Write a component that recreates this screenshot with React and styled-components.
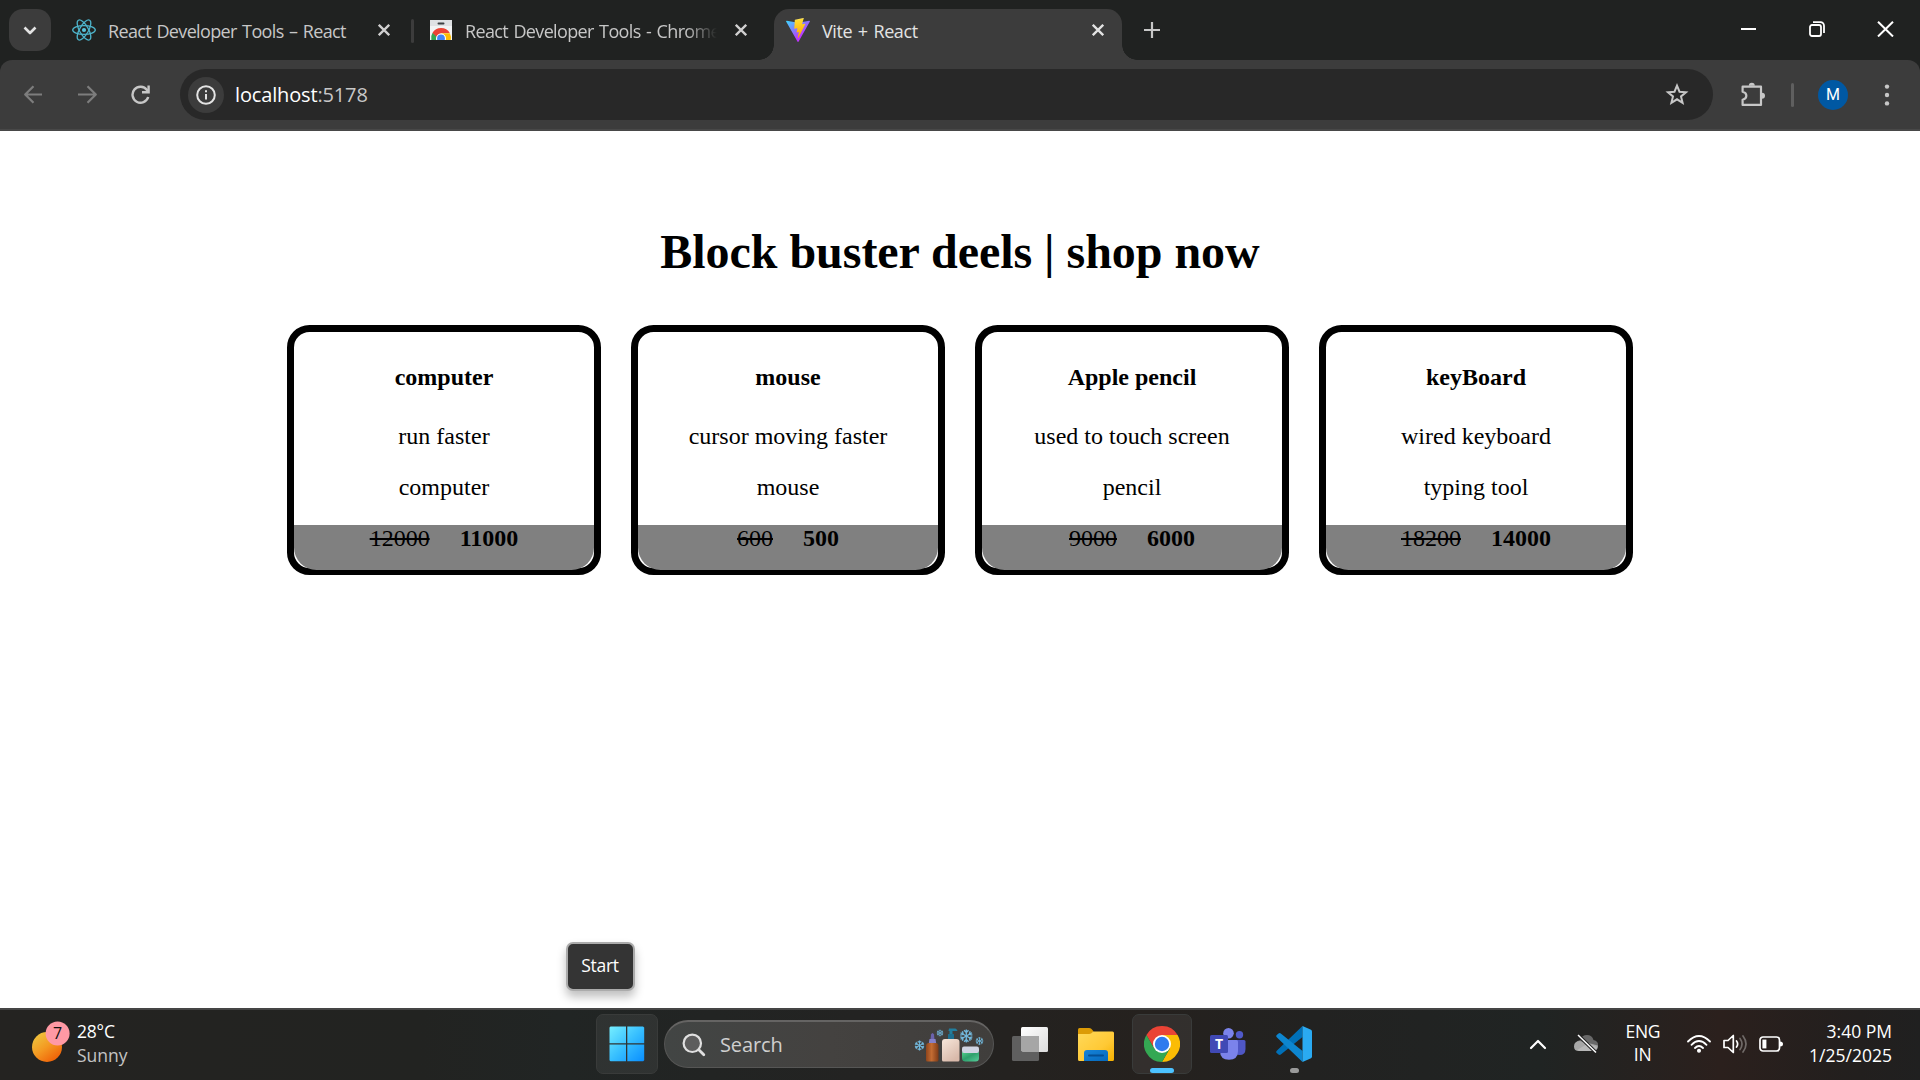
import React from "react";
import styled, { createGlobalStyle } from "styled-components";

const Global = createGlobalStyle`
  * { box-sizing: border-box; }
  body { margin: 0; background: #fff; overflow: hidden; }
  svg { display: block; flex: none; }
`;

const ui = `"Open Sans", "Noto Sans", sans-serif`;

const Screen = styled.div`
  width: 1920px;
  height: 1080px;
  display: flex;
  flex-direction: column;
  overflow: hidden;
  font-family: ${ui};
`;

const Label = styled.span`
  display: block;
  flex: none;
  white-space: nowrap;
  font-size: ${(p) => p.$size || 18}px;
  line-height: ${(p) => p.$line || 24}px;
  letter-spacing: ${(p) => p.$track || 0}px;
  color: ${(p) => p.$color || "#fff"};
`;

/* ---------- tab strip ---------- */
const TabStrip = styled.div`
  height: 60px;
  flex: none;
  display: flex;
  background: #202221;
`;
const TabSearch = styled.button`
  width: 42px;
  height: 42px;
  margin: 9px 0 0 9px;
  padding: 0;
  border: 0;
  border-radius: 14px;
  background: #3c3c3c;
  display: flex;
  align-items: center;
  justify-content: center;
`;
const Tab = styled.div`
  position: relative;
  width: ${(p) => p.$width}px;
  height: 51px;
  margin: 9px 0 0;
  padding: 0 ${(p) => p.$right}px 9px ${(p) => p.$left}px;
  display: flex;
  align-items: center;
  flex: none;
  border-radius: 15px 15px 0 0;
  background: ${(p) => (p.$active ? "#3c3c3c" : "transparent")};
  &::before, &::after {
    content: "";
    display: ${(p) => (p.$active ? "block" : "none")};
    position: absolute;
    bottom: 0;
    width: 15px;
    height: 15px;
  }
  &::before {
    left: -15px;
    background: radial-gradient(circle at 0 0, transparent 14.5px, #3c3c3c 15px);
  }
  &::after {
    right: -15px;
    background: radial-gradient(circle at 100% 0, transparent 14.5px, #3c3c3c 15px);
  }
`;
const TabTitle = styled(Label)`
  flex: 1;
  min-width: 0;
  margin: 2px 18px 0 ${(p) => p.$offset || 12}px;
  word-spacing: 1.4px;
  ${(p) => p.$fade && "mask-image: linear-gradient(90deg, #000 calc(100% - 32px), transparent);"}
`;
const TabDivider = styled.i`
  width: 3px;
  height: 24px;
  margin: 19px 0 0 0;
  border-radius: 2px;
  background: #3c3c3c;
`;
const NewTab = styled.div`
  margin: 22px 0 0 22px;
`;
const WindowButtons = styled.div`
  margin: 21px 26px 0 auto;
  display: flex;
  gap: 52px;
`;

/* ---------- toolbar ---------- */
const CornerFill = styled.div`
  flex: none;
  background: #202221;
`;
const Toolbar = styled.div`
  height: 71px;
  padding: 0 30px 0 22px;
  display: flex;
  align-items: center;
  border-bottom: 2px solid #484848;
  border-radius: 12px 12px 0 0;
  background: #3c3c3c;
`;
const NavButtons = styled.div`
  width: 158px;
  display: flex;
  gap: 30px;
  flex: none;
  svg:last-child { margin-left: 1px; }
`;
const AddressBar = styled.div`
  width: 1533px;
  height: 51px;
  flex: none;
  padding: 0 24px 0 8px;
  display: flex;
  align-items: center;
  border-radius: 26px;
  background: #282828;
`;
const SiteInfo = styled.span`
  width: 36px;
  height: 36px;
  margin-right: 11px;
  display: flex;
  align-items: center;
  justify-content: center;
  border-radius: 50%;
  background: #3c3c3c;
`;
const Url = styled(Label)`
  margin-right: auto;
  b { color: #fff; font-weight: 400; }
`;
const ToolActions = styled.div`
  flex: 1;
  display: flex;
  align-items: center;
  padding-left: 28px;
  svg:last-child { margin-left: auto; }
`;
const ToolDivider = styled.i`
  width: 3px;
  height: 24px;
  margin: 0 24px 0 25px;
  border-radius: 2px;
  background: #5f5f5f;
`;
const Avatar = styled.span`
  width: 30px;
  height: 30px;
  border-radius: 50%;
  background: #0058a3;
  color: #fff;
  font: 400 16px/30px Roboto, sans-serif;
  text-align: center;
`;

/* ---------- page ---------- */
const Page = styled.main`
  position: relative;
  height: 877px;
  flex: none;
  background: #fff;
  font-family: "Liberation Serif", serif;
  color: #000;
`;
const Heading = styled.h1`
  margin: 0;
  padding-top: 93px;
  font-size: 48px;
  line-height: 56px;
  letter-spacing: -0.04px;
  text-align: center;
`;
const Cards = styled.div`
  display: flex;
  justify-content: center;
  gap: 30px;
  margin-top: 45px;
`;
const Card = styled.section`
  width: 314px;
  height: 250px;
  border: 7px solid #000;
  border-radius: 22.5px;
  text-align: center;
  font-size: 24px;
  line-height: 27px;
  h4 { margin: 32px 0; font-size: 24px; }
  p { margin: 24px 0; }
`;
const Prices = styled.div`
  height: 45px;
  display: flex;
  justify-content: center;
  gap: 30px;
  border-radius: 0 0 22.5px 22.5px;
  background: #808080;
`;
const Tooltip = styled.div`
  position: absolute;
  left: 566px;
  top: 811px;
  width: 69px;
  height: 49px;
  border: 2px solid #ababab;
  border-radius: 7px;
  background: #343434;
  box-shadow: 0 6px 10px rgba(0, 0, 0, 0.25);
  display: flex;
  align-items: center;
  justify-content: center;
  padding: 0 1px 4px 0;
  font-family: ${ui};
`;

/* ---------- taskbar ---------- */
const Taskbar = styled.footer`
  height: 72px;
  flex: none;
  display: flex;
  align-items: center;
  padding-bottom: 2px;
  border-top: 2px solid #454545;
  background: linear-gradient(90deg, #242321 0, #222321 420px, #212524 560px, #232322 860px, #25211e 1150px, #222221 1310px, #202423 1540px, #2b201d 1720px, #221f1e 1860px, #202020 1920px);
`;
const Weather = styled.div`
  width: 596px;
  padding-left: 32px;
  display: flex;
  align-items: center;
  gap: 5px;
  flex: none;
  svg { margin-bottom: 5px; }
`;
const Stack = styled.div`
  display: flex;
  flex-direction: column;
  align-items: ${(p) => p.$align || "flex-start"};
  padding-bottom: 2px;
`;
const AppTile = styled.div`
  width: ${(p) => p.$width || 62}px;
  height: 60px;
  margin-right: ${(p) => p.$after || 0}px;
  display: flex;
  flex-direction: column;
  align-items: center;
  justify-content: space-between;
  padding: 11px 0 0;
  flex: none;
  border-radius: 7px;
  border: 1px solid ${(p) => (p.$on ? "#393b3a" : "transparent")};
  background: ${(p) => (p.$on ? "rgba(255,255,255,.065)" : "transparent")};
`;
const Indicator = styled.i`
  width: ${(p) => p.$width}px;
  height: 5px;
  border-radius: 3px;
  background: ${(p) => p.$color};
`;
const SearchBox = styled.div`
  width: 330px;
  height: 48px;
  margin-left: 6px;
  padding: 0 9px 0 17px;
  display: flex;
  align-items: center;
  border: 1px solid #565655;
  border-top: 2px solid #656463;
  border-radius: 24px;
  background: linear-gradient(90deg, #424544, #444240 50%, #403e3c);
`;
const SearchText = styled(Label)`
  margin: 0 auto 0 14px;
`;
const Tray = styled.div`
  flex: 1;
  display: flex;
  align-items: center;
  justify-content: flex-end;
  padding-right: 28px;
`;
const Overflow = styled.div`
  margin-right: 26px;
`;
const Lang = styled(Stack)`
  margin: 0 27px 0 27px;
`;
const Status = styled.div`
  display: flex;
  align-items: center;
  gap: 12px;
`;
const Clock = styled(Stack)`
  width: 109px;
`;

const Line = ({ w, h, d, color = "#c7c7c7", sw = 2, cap = "butt" }) => (
  <svg width={w} height={h} viewBox={`0 0 ${w} ${h}`} fill="none" stroke={color} strokeWidth={sw} strokeLinecap={cap} strokeLinejoin="round">
    <path d={d} />
  </svg>
);

const TabClose = ({ color = "#d0d0d0" }) => <Line w={12} h={12} color={color} sw={2.3} d="M.8.8 11.2 11.2M11.2.8.8 11.2" />;

const ReactLogo = () => (
  <svg width="24" height="24" viewBox="-12 -12 24 24" fill="none" stroke="#4db3ca" strokeWidth="1.3">
    <circle r="2.1" fill="#58c4dc" stroke="none" />
    <ellipse rx="11.3" ry="4.4" />
    <ellipse rx="11.3" ry="4.4" transform="rotate(60)" />
    <ellipse rx="11.3" ry="4.4" transform="rotate(120)" />
  </svg>
);

const WebStoreLogo = () => (
  <svg width="22" height="20" viewBox="0 0 22 20">
    <defs><clipPath id="store"><rect width="22" height="20" rx=".6" /></clipPath></defs>
    <g clipPath="url(#store)">
      <path fill="#f1f3f4" d="M0 0h22v20H0z" />
      <path fill="#dfe1e4" d="M0 0h22v6H0z" />
      <rect x="7.5" y="2.6" width="7" height="2" rx="1" fill="#3c4043" />
      <path fill="#ea4335" d="M2.4 13a10 10 0 0 1 17.4 0H11l-4 7z" />
      <path fill="#34a853" d="M2.4 13A10 10 0 0 0 1.3 20H8l-1-3z" />
      <path fill="#fbbc04" d="M11 13.2h8.8A10 10 0 0 1 20.8 20H13z" />
      <circle cx="11" cy="18.5" r="5" fill="#fff" />
      <circle cx="11" cy="18.5" r="3.9" fill="#4285f4" />
    </g>
  </svg>
);

const ViteLogo = () => (
  <svg width="24" height="24" viewBox="0 0 256 257">
    <defs>
      <linearGradient id="va" x1="-.8%" x2="57.6%" y1="7.7%" y2="78.4%"><stop offset="0" stopColor="#41d1ff" /><stop offset="1" stopColor="#bd34fe" /></linearGradient>
      <linearGradient id="vb" x1="43.4%" x2="50.3%" y1="2.2%" y2="89%"><stop offset="0" stopColor="#ffea83" /><stop offset=".083" stopColor="#ffdd35" /><stop offset="1" stopColor="#ffa800" /></linearGradient>
    </defs>
    <path fill="url(#va)" d="M255.153 37.938 134.897 252.976c-2.483 4.44-8.862 4.466-11.382.048L.875 37.958c-2.746-4.814 1.371-10.646 6.827-9.67l120.385 21.517a6.537 6.537 0 0 0 2.322-.004l117.867-21.483c5.438-.991 9.574 4.796 6.877 9.62Z" />
    <path fill="url(#vb)" d="M185.432.063 96.44 17.501a3.268 3.268 0 0 0-2.634 3.014l-5.474 92.456a3.268 3.268 0 0 0 3.997 3.378l24.777-5.718c2.318-.535 4.413 1.507 3.936 3.838l-7.361 36.047c-.495 2.426 1.782 4.5 4.151 3.78l15.304-4.649c2.372-.72 4.652 1.36 4.15 3.788l-11.698 56.621c-.732 3.542 3.979 5.473 5.943 2.437l1.313-2.028 72.516-144.72c1.215-2.423-.88-5.186-3.54-4.672l-25.505 4.922c-2.396.462-4.435-1.77-3.759-4.114l16.646-57.705c.677-2.35-1.37-4.583-3.769-4.113Z" />
  </svg>
);

const Restore = () => (
  <svg width="16" height="16" viewBox="0 0 16 16" fill="none" stroke="#fff" strokeWidth="1.8">
    <rect x="1" y="4" width="11" height="11" rx="2" />
    <path d="M4 1.2h7.5a3.5 3.5 0 0 1 3.5 3.5V12" />
  </svg>
);

const Reload = () => (
  <svg width="19" height="19" viewBox="0 0 19 19" fill="none" stroke="#c7c7c7" strokeWidth="2.4">
    <path d="M17.2 12A8 8 0 1 1 16 5l1 1.4" />
    <path d="M17.6.6v6.6H11" />
  </svg>
);

const Info = () => (
  <svg width="20" height="20" viewBox="0 0 20 20" fill="none" stroke="#e3e3e3" strokeWidth="2">
    <circle cx="10" cy="10" r="8.8" />
    <path d="M10 9v5.6M10 5.2v2" />
  </svg>
);

const Star = () => (
  <svg width="24" height="24" viewBox="0 0 24 24" fill="none" stroke="#c7c7c7" strokeWidth="2">
    <path d="m12 2.7 2.5 6 6.5.5-5 4.2 1.6 6.4-5.6-3.5-5.6 3.5L8 13.4 3 9.2l6.5-.5z" />
  </svg>
);

const Puzzle = () => (
  <svg width="25" height="25" viewBox="0 0 25 25" fill="none" stroke="#c7c7c7" strokeWidth="2.2" strokeLinejoin="round">
    <path d="M3 4.7h17v18.200H1.600v-5.200c5-1.200 5-6.800 0-8V4.700z" />
    <path d="M7.8 3.8a3 3 0 0 1 6 0zM21 10.7a3 3 0 0 1 0 6z" fill="#c7c7c7" stroke="none" />
  </svg>
);

const Dots = () => (
  <svg width="6" height="24" viewBox="0 0 6 24" fill="#c7c7c7"><circle cx="3" cy="3.6" r="2.2" /><circle cx="3" cy="12" r="2.2" /><circle cx="3" cy="20.4" r="2.2" /></svg>
);

const Sun = () => (
  <svg width="40" height="42" viewBox="0 0 40 42">
    <defs><linearGradient id="sun" x1=".15" y1=".1" x2=".75" y2=".9"><stop stopColor="#efc13c" /><stop offset=".5" stopColor="#f49a22" /><stop offset="1" stopColor="#f0660a" /></linearGradient></defs>
    <circle cx="15" cy="26" r="15" fill="url(#sun)" />
    <circle cx="25.6" cy="12.5" r="12" fill="#ff99a4" />
    <text x="25.6" y="18" textAnchor="middle" fontFamily="Open Sans" fontSize="16" fill="#111">7</text>
  </svg>
);

const WindowsLogo = () => (
  <svg width="36" height="36" viewBox="0 0 36 36">
    <defs><linearGradient id="win" gradientUnits="userSpaceOnUse" x1="0" y1="0" x2="36" y2="36"><stop stopColor="#78f0ff" /><stop offset=".5" stopColor="#37bfff" /><stop offset="1" stopColor="#078cff" /></linearGradient></defs>
    <path fill="url(#win)" d="M1.5.5H17v16.7H.5V1.5zM18.3.5H34l1.2 1v15.7H18.3zM.5 18.5H17v16.8H1.5l-1-1zM18.3 18.5h16.9v15.8l-1 1H18.3z" />
  </svg>
);

const Magnifier = () => (
  <svg width="24" height="24" viewBox="0 0 24 24" fill="none" stroke="#e0e0e0">
    <circle cx="10.3" cy="10.3" r="8.7" strokeWidth="2.2" fill="#5d5d5d" />
    <path d="m16.8 16.8 5 5" strokeWidth="2.8" strokeLinecap="round" />
  </svg>
);

const Flake = ({ x, y, r }) => (
  <g transform={`translate(${x} ${y}) scale(${r / 6})`} stroke="#72b8dc" strokeWidth="1.2" fill="none">
    {[0, 60, 120, 180, 240, 300].map((a) => <path key={a} transform={`rotate(${a})`} d="M0 0v-6M-2-5.2 0-3.2 2-5.2" />)}
  </g>
);

const SearchArt = () => (
  <svg width="70" height="36" viewBox="0 0 70 36">
    <defs>
      <linearGradient id="amber"><stop stopColor="#8f451c" /><stop offset=".45" stopColor="#c36c33" /><stop offset="1" stopColor="#7e3a16" /></linearGradient>
      <linearGradient id="cream" x2=".6" y2="1"><stop stopColor="#f7e6da" /><stop offset="1" stopColor="#d9b9aa" /></linearGradient>
      <linearGradient id="jar" x2="1" y2="1"><stop stopColor="#53cf8b" /><stop offset=".45" stopColor="#2ea06c" /><stop offset="1" stopColor="#56ce9b" /></linearGradient>
    </defs>
    <Flake x={5.5} y={18.5} r={5} />
    <Flake x={26} y={6} r={3.4} />
    <Flake x={52.3} y={9} r={6.6} />
    <Flake x={65.5} y={14} r={4} />
    <path d="M17 7.500q1.500-3 3 0l.5 5.500h-4z" fill="#6b62ac" />
    <path d="M15.500 12h6l.8 5h-7.600z" fill="#8580c8" />
    <path d="M12 19q0-3 3-3h6.500q3 0 3 3v14q0 1.500-1.500 1.500h-9.500q-1.500 0-1.500-1.500z" fill="url(#amber)" />
    <path d="M35 1.500h6.500l2 1.700-.5.8H38.500v3.500h-3V4H34.500z" fill="#237e9e" />
    <path d="M34.500 7h5q.5 0 .5.500V12h-6V7.500q0-.5.500-.5z" fill="#1d6f90" />
    <path d="M28 15q0-3 3-3h11.500q3 0 3 3v18q0 1.500-1.500 1.500H29.500Q28 34.500 28 33z" fill="url(#cream)" />
    <path d="M48 25h17v6q0 3.500-3.500 3.500h-10q-3.500 0-3.500-3.500z" fill="url(#jar)" />
    <rect x="48" y="19.500" width="17" height="6.500" rx="2" fill="#cfd4e2" />
  </svg>
);

const TaskView = () => (
  <svg width="36" height="36" viewBox="0 0 36 36">
    <defs><linearGradient id="tv" x2="1" y2="1"><stop stopColor="#fff" /><stop offset="1" stopColor="#dcdcdc" /></linearGradient></defs>
    <rect x="9" y="1" width="27" height="25" rx="1.500" fill="url(#tv)" />
    <rect y="10" width="27" height="25" rx="1.500" fill="#5f5f5f" />
    <path d="M9 10h18v16H10.500L9 24.500z" fill="#a6a6a6" />
  </svg>
);

const Folder = () => (
  <svg width="36" height="36" viewBox="0 0 36 36">
    <defs>
      <linearGradient id="fo" x2="1" y2="1"><stop stopColor="#ffd95a" /><stop offset=".6" stopColor="#ffc935" /><stop offset="1" stopColor="#f5b000" /></linearGradient>
      <linearGradient id="fb" x2="1" y2="1"><stop stopColor="#1683d8" /><stop offset="1" stopColor="#0569bd" /></linearGradient>
    </defs>
    <path fill="#dc9b06" d="M0 3.500Q0 2 1.500 2H11q1.500 0 2.500 1l2 2.200L12 9H0z" />
    <path fill="url(#fo)" d="M0 8h11q1.500 0 2.500-1l1.500-1.500h19.500Q36 5.500 36 7v26.500Q36 35 34.500 35h-33Q0 35 0 33.500z" />
    <path fill="url(#fb)" d="M6 35v-8q0-3 3-3h18q3 0 3 3v8z" />
    <path d="M11 29.500h14" stroke="#044f94" strokeWidth="2" strokeLinecap="round" />
  </svg>
);

const Chrome = () => (
  <svg width="36" height="36" viewBox="0 0 36 36">
    <path fill="#ea4335" d="M2.410 9A18 18 0 0 1 33.590 9H18l-7.790 13.500z" />
    <path fill="#fbbc04" d="M33.590 9A18 18 0 0 1 18 36l7.790-13.500L18 9z" />
    <path fill="#34a853" d="M2.410 9A18 18 0 0 0 18 36l7.790-13.500H10.210z" />
    <circle cx="18" cy="18" r="9" fill="#fff" />
    <circle cx="18" cy="18" r="7.200" fill="#2f7bee" />
  </svg>
);

const Teams = () => (
  <svg width="36" height="36" viewBox="0 0 36 36">
    <circle cx="29.500" cy="8.700" r="3.700" fill="#5059c9" />
    <path fill="#4f57c5" d="M24 14h10q1.500 0 1.500 1.500V23q0 6-6 6-4 0-5.500-4z" />
    <circle cx="18.500" cy="7.300" r="5.300" fill="#7b83eb" />
    <path fill="#7b83eb" d="M10 14h16.500q1.500 0 1.500 1.500V25q0 8.700-9 8.700T10 25z" />
    <rect y="9" width="18" height="18" rx="1.500" fill="#4049b5" />
    <text x="9" y="23" textAnchor="middle" fontFamily="Open Sans" fontWeight="700" fontSize="14" fill="#fff">T</text>
  </svg>
);

const VSCode = () => (
  <svg width="36" height="36" viewBox="0 0 36 36">
    <path fill="#0070b8" d="M1 24.500Q-.6 26 1 27.300l1.500 1.300q1.200.8 2.300 0L26.500 11V0z" />
    <path fill="#0d86d0" d="M1 11.500Q-.6 10 1 8.700l1.500-1.300q1.200-.8 2.300 0L26.500 25v11z" />
    <path fill="#2aaaf2" d="M26.500 0 35 3.800q1 .6 1 2v24.400q0 1.400-1 2L26.500 36z" />
  </svg>
);

const Cloud = () => (
  <svg width="26" height="20" viewBox="0 0 26 20">
    <path fill="#686868" d="M7 6Q9 1 14 1q5 0 6.500 5 5 1 4.500 5.500L14 14 2 12q1-5 5-6z" />
    <path fill="#a7a7a7" d="M1 12.500Q1 7 7 7l18 4.500q0 5.500-5.500 5.500H6Q1 17 1 12.500z" />
    <path fill="#c3c3c3" d="M4 16 15 9.500l9 3.500q-1 4-4.500 4H6z" opacity=".6" />
    <path d="m5 1 18 17.500" stroke="#222" strokeWidth="3.500" /><path d="m5 1 18 17.500" stroke="#fff" strokeWidth="1.500" />
  </svg>
);

const Wifi = () => (
  <svg width="24" height="18" viewBox="0 0 24 18" fill="none" stroke="#fff" strokeWidth="1.800" strokeLinecap="round">
    <path d="M1 6.500Q12-4.500 23 6.500M4.500 9.800q7.500-7.500 15 0M8 13q4-4 8 0" /><circle cx="12" cy="15.700" r="1.400" fill="#fff" strokeWidth="1.200" />
  </svg>
);

const Speaker = () => (
  <svg width="24" height="20" viewBox="0 0 24 20" fill="none" stroke="#fff" strokeWidth="1.700" strokeLinecap="round" strokeLinejoin="round">
    <path d="M1 6.500h4l5.300-5v17L5 13.500H1z" /><path d="M13.500 7q2.300 3 0 6" /><path stroke="#706a68" d="M17 4.500q4 5.500 0 11M20 2q6 8 0 16" />
  </svg>
);

const Battery = () => (
  <svg width="24" height="16" viewBox="0 0 24 16" fill="none" stroke="#fff" strokeWidth="1.700">
    <rect x="1" y="1" width="19.500" height="14" rx="3" /><rect x="3.400" y="3.600" width="4" height="8.800" fill="#fff" stroke="none" /><path d="M21 5.500q3 0 3 2.500t-3 2.500z" fill="#fff" stroke="none" />
  </svg>
);

const products = [
  { name: "computer", lines: ["run faster", "computer"], old: "12000", now: "11000" },
  { name: "mouse", lines: ["cursor moving faster", "mouse"], old: "600", now: "500" },
  { name: "Apple pencil", lines: ["used to touch screen", "pencil"], old: "9000", now: "6000" },
  { name: "keyBoard", lines: ["wired keyboard", "typing tool"], old: "18200", now: "14000" },
];

export default function App() {
  return (
    <Screen>
      <Global />
      <TabStrip>
        <TabSearch><Line w={14} h={9} sw={2.6} color="#e3e3e3" d="M1.500 1.500 7 7l5.500-5.500" /></TabSearch>
        <Tab $width={360} $left={21} $right={21}>
          <ReactLogo />
          <TabTitle $color="#c7c7c7" $track={-0.65}>React Developer Tools – React</TabTitle>
          <TabClose />
        </Tab>
        <TabDivider />
        <Tab $width={360} $left={16} $right={27}>
          <WebStoreLogo />
          <TabTitle $color="#c7c7c7" $track={-0.65} $offset={13} $fade>React Developer Tools - Chrome</TabTitle>
          <TabClose />
        </Tab>
        <Tab $active $width={348} $left={12} $right={18}>
          <ViteLogo />
          <TabTitle $color="#e3e3e3" $track={-0.4}>Vite + React</TabTitle>
          <TabClose color="#e3e3e3" />
        </Tab>
        <NewTab><Line w={16} h={16} color="#c7c7c7" sw={2.2} d="M8 0v16M0 8h16" /></NewTab>
        <WindowButtons>
          <Line w={17} h={16} color="#fff" sw={2} d="M1 8h15" />
          <Restore />
          <Line w={17} h={16} color="#fff" sw={2} d="M1 .7 16 15.500M16 .7 1 15.500" />
        </WindowButtons>
      </TabStrip>

      <CornerFill>
        <Toolbar>
          <NavButtons>
            <Line w={24} h={19} color="#7d7d7d" sw={2.200} d="M20 9.500H3.500M11.500 1.200 3.200 9.500l8.300 8.300" />
            <Line w={24} h={19} color="#7d7d7d" sw={2.200} d="M2 9.500h17.500M11.500 1.200l8.300 8.300-8.300 8.300" />
            <Reload />
          </NavButtons>
          <AddressBar>
            <SiteInfo><Info /></SiteInfo>
            <Url $size={20} $line={30} $track={-0.15} $color="#c7c7c7"><b>localhost</b>:5178</Url>
            <Star />
          </AddressBar>
          <ToolActions>
            <Puzzle />
            <ToolDivider />
            <Avatar>M</Avatar>
            <Dots />
          </ToolActions>
        </Toolbar>
      </CornerFill>

      <Page>
        <Heading>Block buster deels | shop now</Heading>
        <Cards>
          {products.map((p) => (
            <Card key={p.name}>
              <h4>{p.name}</h4>
              {p.lines.map((l) => <p key={l}>{l}</p>)}
              <Prices><s>{p.old}</s><b>{p.now}</b></Prices>
            </Card>
          ))}
        </Cards>
        <Tooltip><Label $size={17.5} $track={-0.3}>Start</Label></Tooltip>
      </Page>

      <Taskbar>
        <Weather>
          <Sun />
          <Stack>
            <Label $size={17.5} $track={-0.2}>28°C</Label>
            <Label $size={17.5} $color="#c4c4c4">Sunny</Label>
          </Stack>
        </Weather>
        <AppTile $on><WindowsLogo /></AppTile>
        <SearchBox>
          <Magnifier />
          <SearchText $size={20} $line={30} $track={-0.1} $color="#cfcfcf">Search</SearchText>
          <SearchArt />
        </SearchBox>
        <AppTile $width={72}><TaskView /></AppTile>
        <AppTile $width={60} $after={6}><Folder /></AppTile>
        <AppTile $width={60} $on><Chrome /><Indicator $width={24} $color="#4cc2ff" /></AppTile>
        <AppTile $width={72}><Teams /></AppTile>
        <AppTile $width={60}><VSCode /><Indicator $width={9} $color="#9a9a9a" /></AppTile>
        <Tray>
          <Overflow><Line w={18} h={12} color="#fff" sw={2.200} cap="round" d="m2 10 7-7 7 7" /></Overflow>
          <Cloud />
          <Lang $align="center"><Label $size={17.5} $line={23} $track={-0.4}>ENG</Label><Label $size={17.5} $line={23}>IN</Label></Lang>
          <Status><Wifi /><Speaker /><Battery /></Status>
          <Clock $align="flex-end"><Label $size={17.5}>3:40 PM</Label><Label $size={17.5}>1/25/2025</Label></Clock>
        </Tray>
      </Taskbar>
    </Screen>
  );
}
